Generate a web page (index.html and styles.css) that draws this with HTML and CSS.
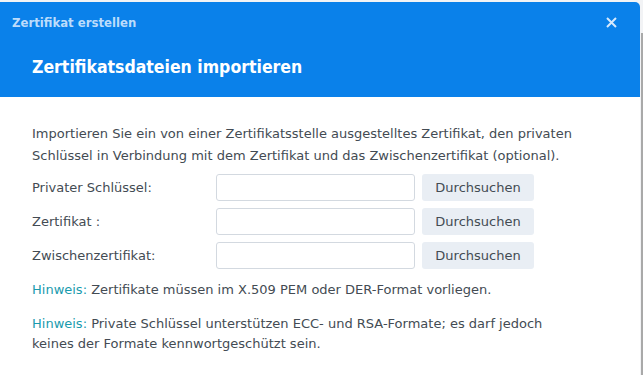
FILE: index.html
```html
<!DOCTYPE html>
<html lang="de">
<head>
	<meta charset="UTF-8">
	<title>Zertifikat erstellen</title>
	<link rel="stylesheet" href="styles.css">
</head>
<body>
	<div class="m-dialog">
		<header class="m-dialog-header">
			<div class="m-dialog-bar">
				<span class="m-dialog-title">Zertifikat erstellen</span>
				<span class="m-dialog-close">
					<svg width="11" height="11" viewBox="0 0 11 11"><path d="M1 1 L10 10 M10 1 L1 10" stroke="currentColor" stroke-width="2" fill="none"/></svg>
				</span>
			</div>
			<h2 class="m-dialog-heading">Zertifikatsdateien importieren</h2>
		</header>
		<section class="m-dialog-content">
			<p class="intro">Importieren Sie ein von einer Zertifikatsstelle ausgestelltes Zertifikat, den privaten Schlüssel in Verbindung mit dem Zertifikat und das Zwischenzertifikat (optional).</p>
			<div class="m-form">
				<div class="m-form-row">
					<label>Privater Schlüssel:</label>
					<input type="text" class="m-input">
					<button class="m-btn">Durchsuchen</button>
				</div>
				<div class="m-form-row">
					<label>Zertifikat :</label>
					<input type="text" class="m-input">
					<button class="m-btn">Durchsuchen</button>
				</div>
				<div class="m-form-row">
					<label>Zwischenzertifikat:</label>
					<input type="text" class="m-input">
					<button class="m-btn">Durchsuchen</button>
				</div>
			</div>
			<p class="note"><span class="hint">Hinweis:</span> Zertifikate müssen im X.509 PEM oder DER-Format vorliegen.</p>
			<p class="note"><span class="hint">Hinweis:</span> Private Schlüssel unterstützen ECC- und RSA-Formate; es darf jedoch keines der Formate kennwortgeschützt sein.</p>
		</section>
	</div>
</body>
</html>
```

FILE: styles.css
```css
html, body {
	margin: 0;
	padding: 0;
	height: 100%;
}
body {
	background-color: #f2f3f5;
	background-image: linear-gradient(#a9a9a9, #a9a9a9);
	background-repeat: no-repeat;
	background-size: 2px calc(100% - 33px);
	background-position: 641px 33px;
	font-family: "DejaVu Sans", Verdana, sans-serif;
	overflow: hidden;
}
h2, p {
	margin: 0;
	padding: 0;
}
.m-dialog {
	width: 640px;
	height: 373px;
	margin-top: 2px;
	background-color: #fff;
	border-radius: 0 5px 0 0;
	overflow: hidden;
}
.m-dialog-header {
	height: 95px;
	background-color: #0a81ea;
	color: #fff;
}
.m-dialog-bar {
	height: 40px;
	display: flex;
	align-items: center;
	justify-content: space-between;
	padding: 0 23px 0 12px;
}
.m-dialog-title {
	font-family: "DejaVu Sans Condensed", "DejaVu Sans", sans-serif;
	font-stretch: condensed;
	font-weight: bold;
	font-size: 13px;
	color: #bcdcfb;
}
.m-dialog-close {
	display: flex;
	color: #d6e9fd;
}
.m-dialog-heading {
	padding-left: 32px;
	margin-top: 14px;
	font-family: "DejaVu Sans Condensed", "DejaVu Sans", sans-serif;
	font-stretch: condensed;
	font-weight: bold;
	font-size: 17.5px;
	line-height: 22px;
}
.m-dialog-content {
	padding: 26px 32px 0;
	font-size: 13px;
	color: #434b53;
}
.intro {
	line-height: 22px;
}
.m-form {
	margin-top: 7px;
	display: flex;
	flex-direction: column;
	gap: 7px;
}
.m-form-row {
	display: flex;
	align-items: center;
}
.m-form-row label {
	width: 184px;
}
.m-input {
	width: 199px;
	height: 27px;
	box-sizing: border-box;
	border: 1px solid #d3d9e0;
	border-radius: 3px;
	margin: 0;
}
.m-btn {
	margin-left: 7px;
	width: 112px;
	height: 27px;
	border: none;
	border-radius: 3px;
	background-color: #e9eef4;
	color: #434b53;
	font-family: inherit;
	font-size: 13px;
	padding: 0;
}
.note {
	max-width: 540px;
	margin-top: 11px;
	line-height: 20px;
}
.note + .note {
	margin-top: 14px;
}
.hint {
	color: #1a9bae;
}
```
